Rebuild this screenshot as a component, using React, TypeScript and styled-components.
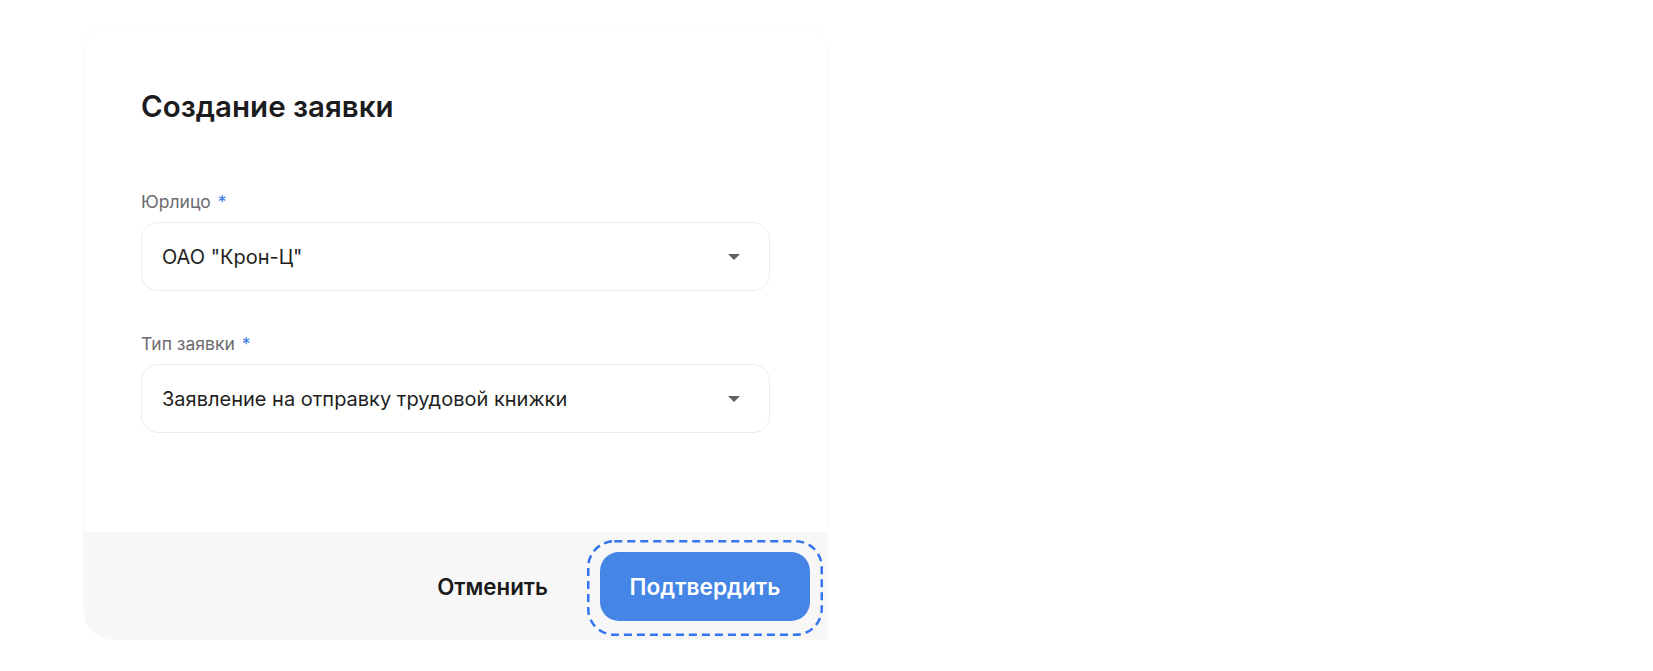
import React from "react";
import styled, { createGlobalStyle } from "styled-components";

const GlobalStyle = createGlobalStyle`
  body {
    margin: 0;
    background: #ffffff;
    font-family: Inter, "Noto Sans", "Liberation Sans", sans-serif;
  }
`;

const Page = styled.div`
  width: 1653px;
  height: 671px;
  padding: 27px 0 0 83px;
  box-sizing: border-box;
`;

const Card = styled.div`
  width: 745px;
  display: flex;
  flex-direction: column;
  border: 1px solid #f9f9f9;
  border-bottom: none;
  border-radius: 24px 24px 0 30px;
  box-sizing: border-box;
  overflow: hidden;
  background: #ffffff;
`;

const Body = styled.div`
  display: flex;
  flex-direction: column;
  padding: 61px 57px 99px 57px;
`;

const Title = styled.h2`
  margin: 0 0 69px;
  font-size: 29.5px;
  line-height: 34px;
  font-weight: 600;
  color: #1c1c1e;
`;

const Field = styled.div`
  display: flex;
  flex-direction: column;
  gap: 10px;
  & + & {
    margin-top: 43px;
  }
`;

const Label = styled.label`
  font-size: 17.5px;
  line-height: 20px;
  color: #6b6b70;
`;

const Required = styled.span`
  color: #3d7ee6;
  margin-left: 7px;
`;

const Select = styled.div`
  height: 69px;
  box-sizing: border-box;
  display: flex;
  align-items: center;
  justify-content: space-between;
  padding: 0 29px 0 20px;
  border: 1px solid #ececec;
  border-radius: 17px;
  background: #ffffff;
  font-size: 20px;
  color: #1f1f1f;
`;

const Caret = styled.span`
  width: 0;
  height: 0;
  border-left: 6px solid transparent;
  border-right: 6px solid transparent;
  border-top: 6px solid #616161;
`;

const Footer = styled.div`
  height: 108px;
  display: flex;
  align-items: center;
  justify-content: flex-end;
  gap: 52px;
  padding-right: 17px;
  background: #f7f7f7;
  border-bottom-left-radius: 30px;
`;

const CancelButton = styled.button`
  border: none;
  background: none;
  padding: 0;
  font-family: inherit;
  font-size: 22.3px;
  font-weight: 600;
  color: #1a1a1a;
  cursor: pointer;
`;

const FocusWrap = styled.div`
  position: relative;
  display: flex;
`;

const FocusRing = styled.svg`
  position: absolute;
  left: -13px;
  top: -12px;
  width: 236px;
  height: 96px;
  overflow: visible;
  pointer-events: none;
`;

const ConfirmButton = styled.button`
  width: 210px;
  height: 69px;
  border: none;
  border-radius: 19px;
  background: #4585e6;
  color: #ffffff;
  font-family: inherit;
  font-size: 22.7px;
  font-weight: 600;
  cursor: pointer;
`;

const fields = [
  { label: "Юрлицо", value: 'ОАО "Крон-Ц"' },
  { label: "Тип заявки", value: "Заявление на отправку трудовой книжки" },
];

export default function App() {
  return (
    <>
      <GlobalStyle />
      <Page>
        <Card>
          <Body>
            <Title>Создание заявки</Title>
            {fields.map((f) => (
              <Field key={f.label}>
                <Label>
                  {f.label}
                  <Required>*</Required>
                </Label>
                <Select>
                  <span>{f.value}</span>
                  <Caret />
                </Select>
              </Field>
            ))}
          </Body>
          <Footer>
            <CancelButton>Отменить</CancelButton>
            <FocusWrap>
              <ConfirmButton>Подтвердить</ConfirmButton>
              <FocusRing viewBox="0 0 236 96">
                <rect
                  x="1.25"
                  y="1.25"
                  width="233.5"
                  height="93.5"
                  rx="26"
                  fill="none"
                  stroke="#3474ef"
                  strokeWidth="2.5"
                  strokeDasharray="8 5"
                />
              </FocusRing>
            </FocusWrap>
          </Footer>
        </Card>
      </Page>
    </>
  );
}
